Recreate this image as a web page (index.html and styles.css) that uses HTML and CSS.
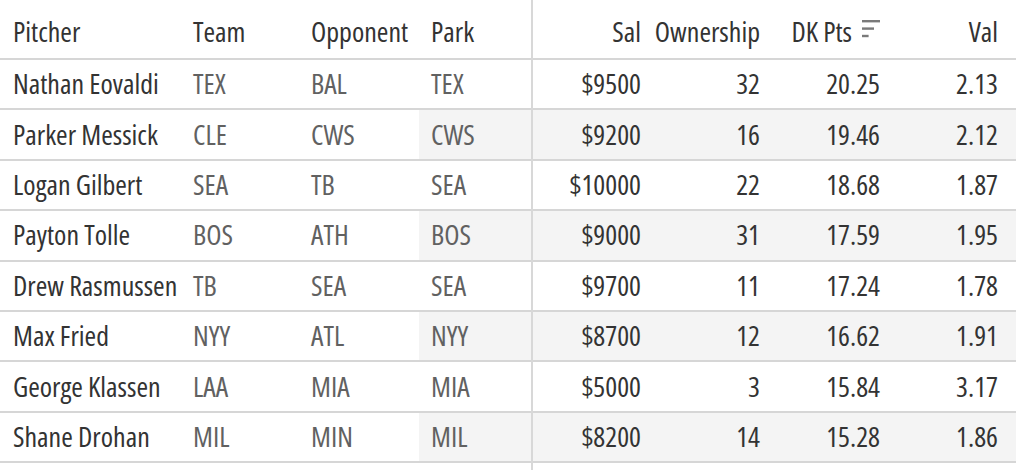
FILE: index.html
```html
<!DOCTYPE html>
<html>
<head>
<meta charset="utf-8">
<link rel="stylesheet" href="styles.css">
</head>
<body>
<div class="grid">
  <div class="frozen">
    <div class="row head">
      <div class="cell first">Pitcher</div>
      <div class="cell">Team</div>
      <div class="cell">Opponent</div>
      <div class="cell">Park</div>
    </div>
    <div class="row"><div class="cell first name">Nathan Eovaldi</div><div class="cell code">TEX</div><div class="cell code">BAL</div><div class="cell code park">TEX</div></div>
    <div class="row even"><div class="cell first name">Parker Messick</div><div class="cell code">CLE</div><div class="cell code">CWS</div><div class="cell code park">CWS</div></div>
    <div class="row"><div class="cell first name">Logan Gilbert</div><div class="cell code">SEA</div><div class="cell code">TB</div><div class="cell code park">SEA</div></div>
    <div class="row even"><div class="cell first name">Payton Tolle</div><div class="cell code">BOS</div><div class="cell code">ATH</div><div class="cell code park">BOS</div></div>
    <div class="row"><div class="cell first name">Drew Rasmussen</div><div class="cell code">TB</div><div class="cell code">SEA</div><div class="cell code park">SEA</div></div>
    <div class="row even"><div class="cell first name">Max Fried</div><div class="cell code">NYY</div><div class="cell code">ATL</div><div class="cell code park">NYY</div></div>
    <div class="row"><div class="cell first name">George Klassen</div><div class="cell code">LAA</div><div class="cell code">MIA</div><div class="cell code park">MIA</div></div>
    <div class="row even"><div class="cell first name">Shane Drohan</div><div class="cell code">MIL</div><div class="cell code">MIN</div><div class="cell code park">MIL</div></div>
  </div>
  <div class="scroll">
    <div class="row head">
      <div class="cell">Sal</div>
      <div class="cell">Ownership</div>
      <div class="cell sorted">DK Pts
        <svg class="sort-icon" width="21" height="18" viewBox="0 0 21 18" aria-hidden="true">
          <rect x="0" y="0" width="18" height="2.4" fill="#7a7a7a"/>
          <rect x="0" y="7.4" width="12" height="2.4" fill="#7a7a7a"/>
          <rect x="0" y="14.8" width="6.6" height="2.4" fill="#7a7a7a"/>
        </svg>
      </div>
      <div class="cell">Val</div>
    </div>
    <div class="row"><div class="cell num">$9500</div><div class="cell num">32</div><div class="cell num">20.25</div><div class="cell num">2.13</div></div>
    <div class="row even"><div class="cell num">$9200</div><div class="cell num">16</div><div class="cell num">19.46</div><div class="cell num">2.12</div></div>
    <div class="row"><div class="cell num">$10000</div><div class="cell num">22</div><div class="cell num">18.68</div><div class="cell num">1.87</div></div>
    <div class="row even"><div class="cell num">$9000</div><div class="cell num">31</div><div class="cell num">17.59</div><div class="cell num">1.95</div></div>
    <div class="row"><div class="cell num">$9700</div><div class="cell num">11</div><div class="cell num">17.24</div><div class="cell num">1.78</div></div>
    <div class="row even"><div class="cell num">$8700</div><div class="cell num">12</div><div class="cell num">16.62</div><div class="cell num">1.91</div></div>
    <div class="row"><div class="cell num">$5000</div><div class="cell num">3</div><div class="cell num">15.84</div><div class="cell num">3.17</div></div>
    <div class="row even"><div class="cell num">$8200</div><div class="cell num">14</div><div class="cell num">15.28</div><div class="cell num">1.86</div></div>
  </div>
</div>
</body>
</html>
```

FILE: styles.css
```css
html, body {
  margin: 0;
  padding: 0;
  background: #ffffff;
}

body {
  font-family: "Open Sans", "Roboto", "Liberation Sans", sans-serif;
  font-stretch: 75%;
  color: #333333;
  width: 1016px;
  height: 470px;
  overflow: hidden;
}

.grid {
  display: flex;
  height: 470px;
}

.frozen {
  width: 531px;
  flex: none;
}

.scroll {
  width: 483px;
  flex: none;
  border-left: 2px solid #d8d8d8;
  height: 470px;
}

.row {
  display: grid;
  height: 50.4px;
  box-sizing: border-box;
  border-bottom: 2px solid #d6d6d6;
}

.frozen .row {
  grid-template-columns: 181px 118px 120px 112px;
}

.scroll .row {
  grid-template-columns: 126px 119px 120px 118px;
}

.row.head {
  height: 60px;
}

.cell {
  display: flex;
  align-items: center;
  font-size: 28px;
  font-weight: 500;
  padding-left: 12px;
  padding-bottom: 2px;
  white-space: nowrap;
}

.cell.first {
  padding-left: 13px;
}

.head .cell {
  padding-top: 3px;
  padding-bottom: 0;
  color: #333333;
}

.scroll .cell {
  justify-content: flex-end;
  padding-left: 0;
  padding-right: 18px;
}

.code {
  color: #616161;
}

.num {
  font-weight: 400;
  color: #333333;
}

.even .park,
.scroll .row.even {
  background: #f4f4f4;
}

.sorted {
  gap: 10px;
}

.sort-icon {
  flex: none;
  margin-right: -3px;
  margin-top: -4px;
}
```
